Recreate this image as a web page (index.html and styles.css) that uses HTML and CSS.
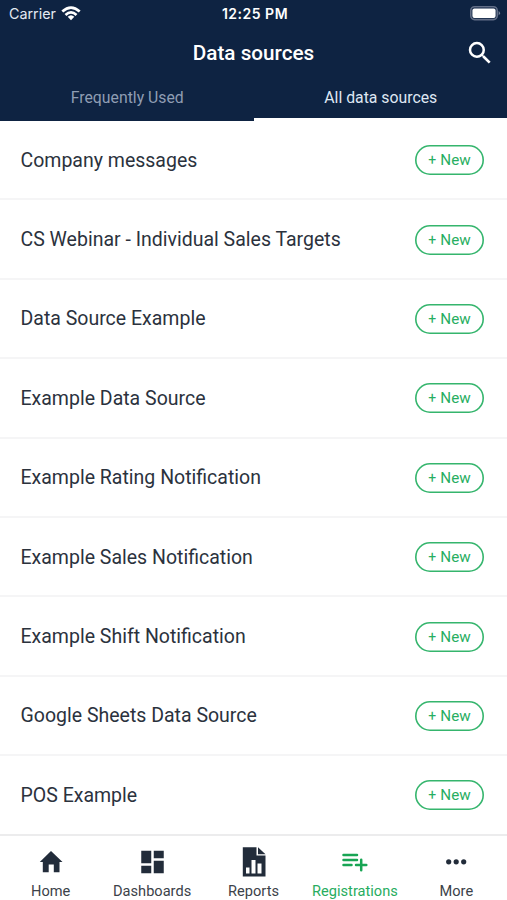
FILE: index.html
```html
<!DOCTYPE html>
<html lang="en">
<head>
<meta charset="utf-8">
<title>Data sources</title>
<link rel="stylesheet" href="styles.css">
</head>
<body>
<header class="header">
  <div class="status">
    <div class="carrier"><span>Carrier</span>
      <svg width="20" height="15" viewBox="0 0 20 15" fill="none" stroke="#fff" stroke-width="2.7"><path d="M1.3 5.6Q10-2.4 18.7 5.6M4.5 9Q10 3.8 15.5 9"/><path d="M6.7 10.8Q10 7.8 13.3 10.8L10 14.2Z" fill="#fff" stroke="none"/></svg>
    </div>
    <div class="clock">12:25 PM</div>
    <svg class="battery" width="31" height="15" viewBox="0 0 31 15"><rect x=".8" y=".8" width="26.4" height="12.8" rx="3.8" fill="none" stroke="#626e87" stroke-width="1.6"/><rect x="2.4" y="2.4" width="23.2" height="9.6" rx="2" fill="#fff"/><path d="M28.600 5Q31.500 7.200 28.600 9.400Z" fill="#78839a"/></svg>
  </div>
  <div class="titlebar">
    <h1>Data sources</h1>
    <svg class="search" width="30" height="30" viewBox="0 0 24 24" fill="#fff"><path d="M15.5 14h-.79l-.28-.27A6.47 6.47 0 0 0 16 9.500A6.500 6.500 0 1 0 9.500 16c1.610 0 3.090-.59 4.230-1.570l.27.28v.79l5 4.990L20.490 19zm-6 0A4.500 4.500 0 1 1 14 9.500 4.500 4.500 0 0 1 9.500 14z"/></svg>
  </div>
  <nav class="tabs">
    <div class="tab">Frequently Used</div>
    <div class="tab active">All data sources</div>
  </nav>
</header>
<main class="list">
  <div class="row"><span>Company messages</span><button><span class="plus">+</span>New</button></div>
  <div class="row"><span>CS Webinar - Individual Sales Targets</span><button><span class="plus">+</span>New</button></div>
  <div class="row"><span>Data Source Example</span><button><span class="plus">+</span>New</button></div>
  <div class="row"><span>Example Data Source</span><button><span class="plus">+</span>New</button></div>
  <div class="row"><span>Example Rating Notification</span><button><span class="plus">+</span>New</button></div>
  <div class="row"><span>Example Sales Notification</span><button><span class="plus">+</span>New</button></div>
  <div class="row"><span>Example Shift Notification</span><button><span class="plus">+</span>New</button></div>
  <div class="row"><span>Google Sheets Data Source</span><button><span class="plus">+</span>New</button></div>
  <div class="row"><span>POS Example</span><button><span class="plus">+</span>New</button></div>
</main>
<footer class="bottom">
  <div class="item"><svg width="30" height="30" viewBox="0 0 30 30"><path d="M15 4L26.500 15H23.500V25.300H17.800V17.500H12.700V25.300H6.800V15H3.800Z"/></svg><span>Home</span></div>
  <div class="item"><svg width="30" height="30" viewBox="0 0 24 24"><path d="M3 13h8V3H3zm0 8h8v-6H3zm10 0h8V11h-8zm0-18v6h8V3z" transform="translate(.4 0)"/></svg><span>Dashboards</span></div>
  <div class="item"><svg width="30" height="30" viewBox="0 0 30 30"><path fill-rule="evenodd" d="M3.800.2H17.500V8.500H26.500V29.500H3.800ZM7 20.500H10.500V26.500H7ZM12.500 13H16.500V26.500H12.500ZM18.500 16.500H22.500V26.500H18.500Z"/><path d="M19 .2L26.500 7.200H19Z"/></svg><span>Reports</span></div>
  <div class="item active"><svg width="30" height="30" viewBox="0 0 30 30"><path fill="none" stroke="#18a554" stroke-width="2.500" stroke-linecap="round" d="M3.500 8H17M3.500 13H17M3.500 18H11.500M16 18H26.300M21.200 12.800V23.200"/></svg><span>Registrations</span></div>
  <div class="item"><svg width="30" height="30" viewBox="0 0 30 30"><circle cx="7.700" cy="14.800" r="2.600"/><circle cx="15.200" cy="14.800" r="2.600"/><circle cx="22.700" cy="14.800" r="2.600"/></svg><span>More</span></div>
</footer>
</body>
</html>
```
FILE: styles.css
```css
* { box-sizing: border-box; }
body {
  margin: 0;
  height: 900px;
  display: flex;
  flex-direction: column;
  overflow: hidden;
  background: #fff;
  color: #2b323d;
  font-family: Roboto, "Liberation Sans", sans-serif;
}
svg { display: block; flex: none; }
.header { height: 121px; background: #0e2342; color: #fff; flex: none; }
.status {
  height: 27px;
  display: grid;
  grid-template-columns: 1fr auto 1fr;
  align-items: center;
  padding: 0 6px 0 9px;
  font: 14.300px/18px Inter, sans-serif;
}
.carrier { display: flex; align-items: center; gap: 6px; color: #e4e9f2; }
.carrier svg { margin-left: -1px; }
.clock { font-size: 14px; font-weight: 600; letter-spacing: .5px; }
.battery { justify-self: end; }
.titlebar {
  height: 51px;
  display: grid;
  grid-template-columns: 1fr auto 1fr;
  align-items: center;
  padding: 0 12px;
}
.titlebar h1 { grid-column: 2; margin: 0; font-size: 20.700px; font-weight: 500; line-height: 28px; }
.search { justify-self: end; }
.tabs { display: flex; height: 43px; }
.tab {
  flex: 1;
  padding-left: 1px;
  text-align: center;
  font-size: 15.800px;
  line-height: 39px;
  color: #8f9db3;
}
.tab.active { color: #dfe7f3; border-bottom: 3px solid #fff; }
.list { height: 713px; flex: none; }
.row {
  height: 79.400px;
  display: flex;
  align-items: center;
  justify-content: space-between;
  padding: 1px 23px 0 20.500px;
  border-bottom: 2px solid #f5f5f6;
  font-size: 19.500px;
}
.row:last-child { border-color: transparent; }
.row button {
  width: 69px;
  height: 30px;
  display: flex;
  align-items: center;
  justify-content: center;
  gap: 4px;
  padding: 0;
  border: 0;
  box-shadow: inset 0 0 0 1.600px #35b56d;
  border-radius: 15px;
  background: #fff;
  color: #27ae62;
  font: 15.200px Roboto, sans-serif;
}
.plus { font-size: 14px; }
.bottom {
  height: 66px;
  flex: none;
  display: flex;
  border-top: 2px solid #ececed;
}
.item {
  flex: 1;
  display: flex;
  flex-direction: column;
  align-items: center;
  padding-top: 11px;
  font-size: 14.600px;
  line-height: 18px;
  gap: 5px;
}
.item svg { fill: #222c3a; }
.item span { color: #3c4249; }
.item.active svg { fill: #18a554; }
.item.active span { color: #27ad60; }
```
